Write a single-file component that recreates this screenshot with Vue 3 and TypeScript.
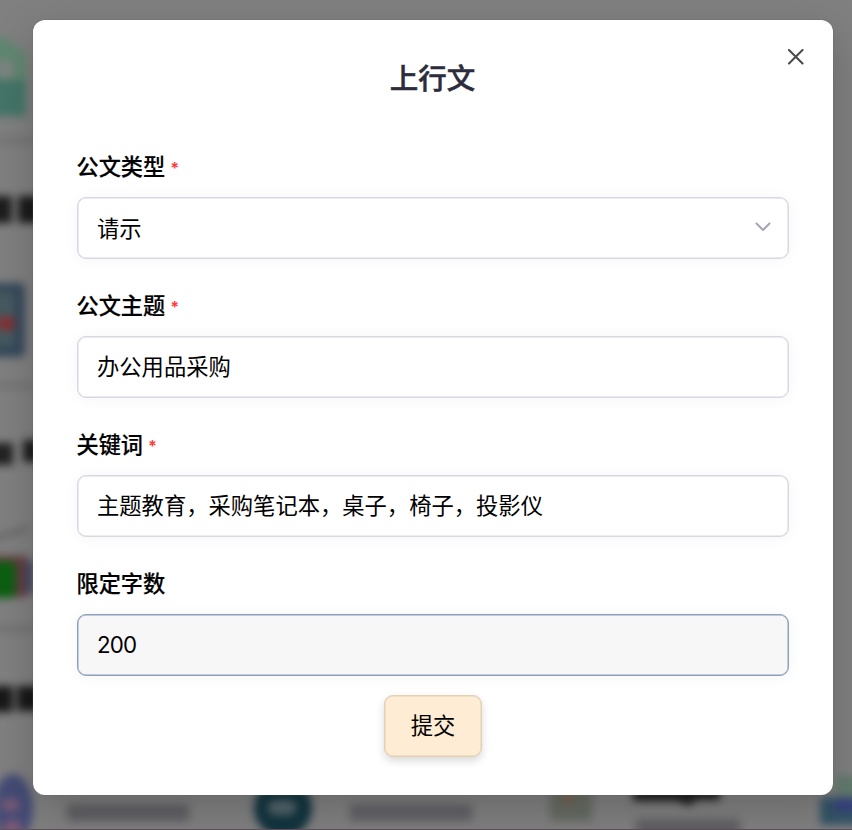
<script setup lang="ts">
import { ref } from 'vue'

interface Field {
  key: string
  label: string
  required: boolean
  kind: 'select' | 'text'
  active?: boolean
}

const fields: Field[] = [
  { key: 'type', label: '公文类型', required: true, kind: 'select' },
  { key: 'topic', label: '公文主题', required: true, kind: 'text' },
  { key: 'keywords', label: '关键词', required: true, kind: 'text' },
  { key: 'limit', label: '限定字数', required: false, kind: 'text', active: true },
]

const values = ref<Record<string, string>>({
  type: '请示',
  topic: '办公用品采购',
  keywords: '主题教育，采购笔记本，桌子，椅子，投影仪',
  limit: '200',
})
</script>

<template>
  <div class="page">
    <svg class="backdrop" viewBox="0 0 852 830" aria-hidden="true">
      <defs>
        <filter
          id="soft"
          filterUnits="userSpaceOnUse"
          x="-40"
          y="-40"
          width="932"
          height="910"
          color-interpolation-filters="sRGB"
        >
          <feGaussianBlur stdDeviation="4.4" />
        </filter>
      </defs>
      <g filter="url(#soft)">
        <path d="M-20 34L5 38L26 53V84H-20Z" fill="#5f8770" />
        <path d="M-20 80H26V116H-20Z" fill="#437568" />
        <rect x="-4" y="60" width="18" height="18" rx="3" fill="#7d8581" />
        <rect x="-20" y="138" width="54" height="6" fill="#727272" />
        <rect x="-20" y="196" width="32" height="27" fill="#1d1d1d" />
        <rect x="18" y="196" width="32" height="27" fill="#1b1b1b" />
        <rect x="-20" y="283" width="45" height="74" rx="5" fill="#34475a" />
        <rect x="-16" y="292" width="31" height="54" fill="#465a60" />
        <rect x="-2" y="317" width="16" height="13" fill="#8a2e30" />
        <rect x="-20" y="383" width="54" height="5" fill="#707070" />
        <rect x="-20" y="443" width="33" height="22" fill="#222222" />
        <rect x="23" y="440" width="30" height="22" fill="#1c1c1c" />
        <path d="M-15 542L28 528" stroke="#626262" stroke-width="4" />
        <rect x="-20" y="556" width="48" height="41" rx="4" fill="#653c3e" />
        <rect x="-22" y="561" width="38" height="37" rx="5" fill="#0c5f12" />
        <rect x="25" y="561" width="9" height="32" fill="#454967" />
        <rect x="-20" y="626" width="54" height="6" fill="#707070" />
        <rect x="-20" y="686" width="33" height="26" fill="#181818" />
        <rect x="17" y="686" width="34" height="25" fill="#181818" />
        <ellipse cx="13" cy="808" rx="20" ry="34" fill="#444b76" />
        <rect x="2" y="799" width="17" height="12" rx="5" fill="#7c5a76" />
        <rect x="4" y="820" width="17" height="20" rx="5" fill="#7c5a76" />
        <rect x="67" y="804" width="122" height="17" fill="#606064" />
        <circle cx="283" cy="808" r="29" fill="#12343f" />
        <rect x="268" y="800" width="28" height="15" rx="6" fill="#53656b" />
        <rect x="350" y="804" width="122" height="17" fill="#626267" />
        <rect x="550" y="790" width="42" height="31" fill="#666b63" />
        <rect x="562" y="790" width="12" height="12" fill="#7b604c" />
        <path d="M633 780H720V800H697L688 806L678 801H633Z" fill="#1c1c1c" />
        <rect x="636" y="819" width="104" height="24" fill="#606064" />
        <rect x="836" y="776" width="36" height="20" fill="#607a6d" />
        <rect x="820" y="797" width="52" height="28" fill="#335265" />
        <rect x="835" y="799" width="38" height="12" fill="#353f7d" />
      </g>
      <rect x="0" y="829" width="852" height="1" fill="#5f5159" />
    </svg>

    <form class="dialog" role="dialog" aria-labelledby="dialog-title" @submit.prevent>
      <button class="close" type="button">
        <svg viewBox="0 0 16 16"><path d="M1 1L15 15M15 1L1 15" /></svg>
      </button>
      <h2 id="dialog-title" class="title">上行文</h2>

      <div class="fields">
        <div v-for="field in fields" :key="field.key" class="field">
          <label class="label" :for="field.key">
            <span>{{ field.label }}</span>
            <span v-if="field.required" class="required">*</span>
          </label>
          <div v-if="field.kind === 'select'" :id="field.key" class="control select" role="combobox" tabindex="0">
            <span>{{ values[field.key] }}</span>
            <svg class="chevron" viewBox="0 0 16 10"><path d="M1.5 1.5L8 8L14.5 1.5" /></svg>
          </div>
          <input
            v-else
            :id="field.key"
            v-model="values[field.key]"
            class="control"
            :class="{ active: field.active }"
            type="text"
          />
        </div>
      </div>

      <button class="submit" type="submit">提交</button>
    </form>
  </div>
</template>

<style>
body {
  overflow: hidden;
}
</style>

<style scoped>
* {
  box-sizing: border-box;
}

.page {
  position: relative;
  width: 852px;
  height: 830px;
  padding: 19.5px 19px 0 33px;
  overflow: hidden;
  background: #808080;
  font-family: Inter, "Noto Sans CJK SC", sans-serif;
  color: #000;
}

.backdrop {
  position: absolute;
  inset: 0;
  width: 852px;
  height: 830px;
}

.dialog {
  position: relative;
  display: flex;
  flex-direction: column;
  align-items: center;
  width: 800px;
  height: 775.5px;
  padding: 38.5px 44px 0;
  border-radius: 12px;
  background: #fff;
  box-shadow: 0 0 0 0.5px rgba(90, 90, 90, 0.35), 0 14px 44px rgba(0, 0, 0, 0.2);
}

.close {
  position: absolute;
  top: 29.5px;
  right: 29.5px;
  display: flex;
  padding: 0;
  border: 0;
  background: none;
}

.close svg {
  width: 15.5px;
  height: 15.5px;
  fill: none;
  stroke: #4a4a4a;
  stroke-width: 2.1;
  stroke-linecap: round;
}

.title {
  margin: 0 1px 0 0;
  font-size: 28.5px;
  font-weight: 500;
  line-height: 42px;
  color: #2c2c3d;
  -webkit-text-stroke: 0.5px currentColor;
}

.fields {
  display: flex;
  flex-direction: column;
  gap: 31px;
  width: 100%;
  margin-top: 51px;
}

.field {
  display: flex;
  flex-direction: column;
  gap: 13.5px;
}

.field + .field {
  margin-top: 0.5px;
}

.label {
  display: flex;
  align-items: center;
  gap: 5px;
  height: 32px;
  margin-left: -0.5px;
  font-size: 22.2px;
  font-weight: 500;
  line-height: 32px;
  -webkit-text-stroke: 0.2px currentColor;
}

.required {
  height: 32px;
  padding-top: 1px;
  font-size: 16px;
  font-weight: 700;
  color: #ff3b3b;
  -webkit-text-stroke: 0;
}

.control {
  display: block;
  width: 100%;
  height: 62px;
  padding: 0 19px 3px;
  border: 1px solid #d9d7e3;
  border-radius: 9px;
  outline: none;
  background: #fff;
  box-shadow: inset 0 0 0 0.5px #d9d7e3, 0 1px 16px rgba(0, 0, 0, 0.045);
  font: 400 22.3px/32px Inter, "Noto Sans CJK SC", sans-serif;
  color: #000;
}

.select {
  display: flex;
  align-items: center;
  justify-content: space-between;
}

.select span {
  padding-top: 5px;
}

.chevron {
  width: 16px;
  height: 10px;
  margin-right: -2px;
  margin-top: 2px;
  fill: none;
  stroke: #a5a3b8;
  stroke-width: 2;
  stroke-linecap: round;
  stroke-linejoin: round;
}

.active {
  padding-bottom: 0;
  border-color: #8fa0bd;
  background: #f7f7f7;
  box-shadow: inset 0 0 0 0.5px #8fa0bd, 0 1px 16px rgba(0, 0, 0, 0.045);
  letter-spacing: -0.8px;
}

.submit {
  width: 98px;
  height: 62px;
  margin-top: 19px;
  padding: 0;
  border: 1px solid #e4d0b3;
  border-radius: 9px;
  background: #ffecd5;
  box-shadow: inset 0 0 0 0.5px #e4d0b3, 0 4px 9px rgba(0, 0, 0, 0.15);
  font: 400 22.3px/32px Inter, "Noto Sans CJK SC", sans-serif;
  color: #000;
}
</style>
